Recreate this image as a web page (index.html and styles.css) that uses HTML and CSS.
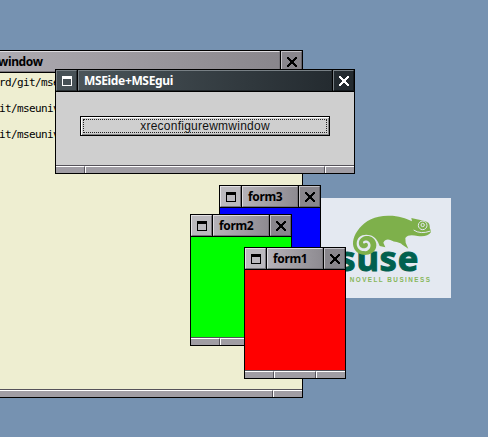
FILE: index.html
```html
<!DOCTYPE html>
<html lang="en">
<head>
<meta charset="utf-8">
<title>MSEide+MSEgui</title>
<link rel="stylesheet" href="styles.css">
</head>
<body>
<svg width="0" height="0" class="defs">
  <symbol id="close" viewBox="0 0 10 10"><path d="M0 0h2v1h1v1h1v1h2v-1h1v-1h1v-1h2v2h-1v1h-1v1h-1v2h1v1h1v1h1v2h-2v-1h-1v-1h-1v-1h-2v1h-1v1h-1v1h-2v-2h1v-1h1v-1h1v-2h-1v-1h-1v-1h-1z" fill="currentColor"/></symbol>
  <symbol id="box" viewBox="0 0 10 10"><path d="M0 0h10v10H0zM1 3v6h8V3z" fill="currentColor" fill-rule="evenodd"/></symbol>
</svg>
<main class="desktop">
  <svg class="logo" viewBox="3 24 390 300">
    <text class="brand" x="55" y="244" textLength="240">suse</text>
    <path fill="#7eb04b" d="M276 94C259 85 235 77 208 77C166 76 137 91 118 115C101 136 94 159 103 177C113 195 137 200 156 189C173 179 173 155 159 144C145 133 122 138 117 155C114 169 127 179 138 173C146 169 146 159 138 158C134 158 134 162 130 160C126 154 136 149 144 153C156 160 153 177 142 182C128 188 110 178 110 161C110 140 130 130 150 136C165 140 173 151 179 168L196 172L190 158C194 149 203 146 211 150C225 158 237 154 247 164L265 176L257 158L256 144C263 134 277 135 293 138C311 140 326 138 333 126L332 119C327 115 332 105 325 98C313 90 290 89 274 84z"/>
    <circle cx="308" cy="106" r="13" fill="#7eb04b" stroke="#e4e9f1" stroke-width="3"/>
    <circle cx="308" cy="105" r="5" fill="none" stroke="#e4e9f1" stroke-width="3"/>
    <path d="M281 120q20 14 51 3" fill="none" stroke="#e4e9f1" stroke-width="3"/>
    <text class="tag" x="62" y="276" textLength="268">A NOVELL BUSINESS</text>
  </svg>

  <section class="win editor">
    <header><h2>window</h2><button class="close"><svg><use href="#close"/></svg></button></header>
    <div class="body"><p>rd/git/mse</p><p>it/mseuniv</p><p>it/mseuniv</p></div>
    <footer><i></i><i></i></footer>
  </section>

  <section class="win form form3">
    <header><button class="menu"><svg><use href="#box"/></svg></button><h2>form3</h2><button class="close"><svg><use href="#close"/></svg></button></header>
    <div class="body"></div>
    <footer><i></i><i></i><i></i></footer>
  </section>
  <section class="win form form2">
    <header><button class="menu"><svg><use href="#box"/></svg></button><h2>form2</h2><button class="close"><svg><use href="#close"/></svg></button></header>
    <div class="body"></div>
    <footer><i></i><i></i><i></i></footer>
  </section>
  <section class="win form form1">
    <header><button class="menu"><svg><use href="#box"/></svg></button><h2>form1</h2><button class="close"><svg><use href="#close"/></svg></button></header>
    <div class="body"></div>
    <footer><i></i><i></i><i></i></footer>
  </section>

  <section class="win dialog">
    <header><button class="menu"><svg><use href="#box"/></svg></button><h2>MSEide+MSEgui</h2><button class="close"><svg><use href="#close"/></svg></button></header>
    <div class="body"><button class="action"><span>xreconfigurewmwindow</span></button></div>
    <footer><i></i><i></i><i></i></footer>
  </section>
</main>
</body>
</html>
```
FILE: styles.css
```css
* { box-sizing: border-box; }
body { margin: 0; }
.defs { position: absolute; }
.desktop { position: relative; width: 488px; height: 437px; overflow: hidden; background: #7692b1; }

.logo { position: absolute; left: 321px; top: 198px; width: 130px; height: 100px; background: #e4e9f1; }
.brand { font: bold 104px "Noto Sans", sans-serif; fill: #00604f; stroke: #00604f; stroke-width: 3px; }
.tag { font: bold 19px "Liberation Sans", sans-serif; fill: #86b659; }

/* Windows */
.win { position: absolute; display: flex; flex-direction: column; border: 1px solid #000; background: #000; }
.win header { flex: none; display: flex; gap: 1px; height: 22px; border-bottom: 1px solid #000; }
.win h2 {
  flex: 1; margin: 0; padding-left: 5px; white-space: nowrap;
  font: bold 12px/19px "Noto Sans", sans-serif; letter-spacing: -.35px; color: #000;
  background: linear-gradient(90deg, #b5b2b8, #8e8b91);
  border: 1px solid; border-color: #dedce0 #77747a #77747a #dedce0;
}
.win header button {
  flex: none; display: grid; place-items: center; width: 21px; padding: 1px 0 0 1px;
  border: 1px solid; border-color: #e4e2e6 #77747a #77747a #e4e2e6;
  color: #000; background: #bbb9be;
}
.win header .close { background: #89868c; border-color: #c5c3c8 #66636a #66636a #c5c3c8; }
.menu svg, .close svg { width: 10px; height: 10px; }
.body { flex: 1; }
.win footer { flex: none; display: flex; height: 8px; border-top: 1px solid #55525a; }
footer i { flex: 1; background: #a09da4; border-top: 1px solid #fff; border-right: 1px solid #55525a; border-left: 1px solid #fff; }
footer i:first-child { flex: 0 0 29px; border-left: 0; }
footer i:last-child { flex: 0 0 29px; border-right: 0; }

.editor { left: -200px; top: 50px; width: 503px; height: 348px; }
.win.editor h2 { padding-left: 196px; background: linear-gradient(90deg, #b5b2b8 30%, #89868c); }
.editor .body { padding-top: 3px; background: #eeeed1; }
.editor p { margin: 0 0 12px 198px; height: 14px; font: 11px/14px "DejaVu Sans Mono", monospace; letter-spacing: -.62px; color: #000; }
.editor footer i:first-child { flex: 1; }

.form { width: 102px; height: 132px; }
.form1 { left: 244px; top: 247px; }
.form2 { left: 190px; top: 214px; }
.form3 { left: 219px; top: 185px; }
.form1 .body { background: #f00; }
.form2 .body { background: #0f0; }
.form3 .body { background: #00f; }

.dialog { left: 55px; top: 69px; width: 300px; height: 105px; }
.dialog h2 { color: #fff; background: linear-gradient(90deg, #4a5459, #242b30); border-color: #788085 #20262a #20262a #788085; }
.dialog header .menu { color: #fff; background: #475156; border-color: #788085 #282e32 #282e32 #788085; }
.dialog header .close { color: #fff; background: #242b30; border-color: #788085 #14191d #14191d #788085; }
.dialog .body { display: flex; justify-content: center; align-items: flex-start; padding-top: 24px; background: #cfcfcf; }
.action {
  width: 250px; height: 20px; padding: 1px; border: 1px solid #000; background: #cfcfcf;
  box-shadow: inset 1px 1px #fff, inset -1px -1px #858585;
}
.action span { display: block; margin: 1px; height: 14px; border: 1px dotted #222; font: 12px/13px "Liberation Sans", sans-serif; color: #111; letter-spacing: .25px; }
```
